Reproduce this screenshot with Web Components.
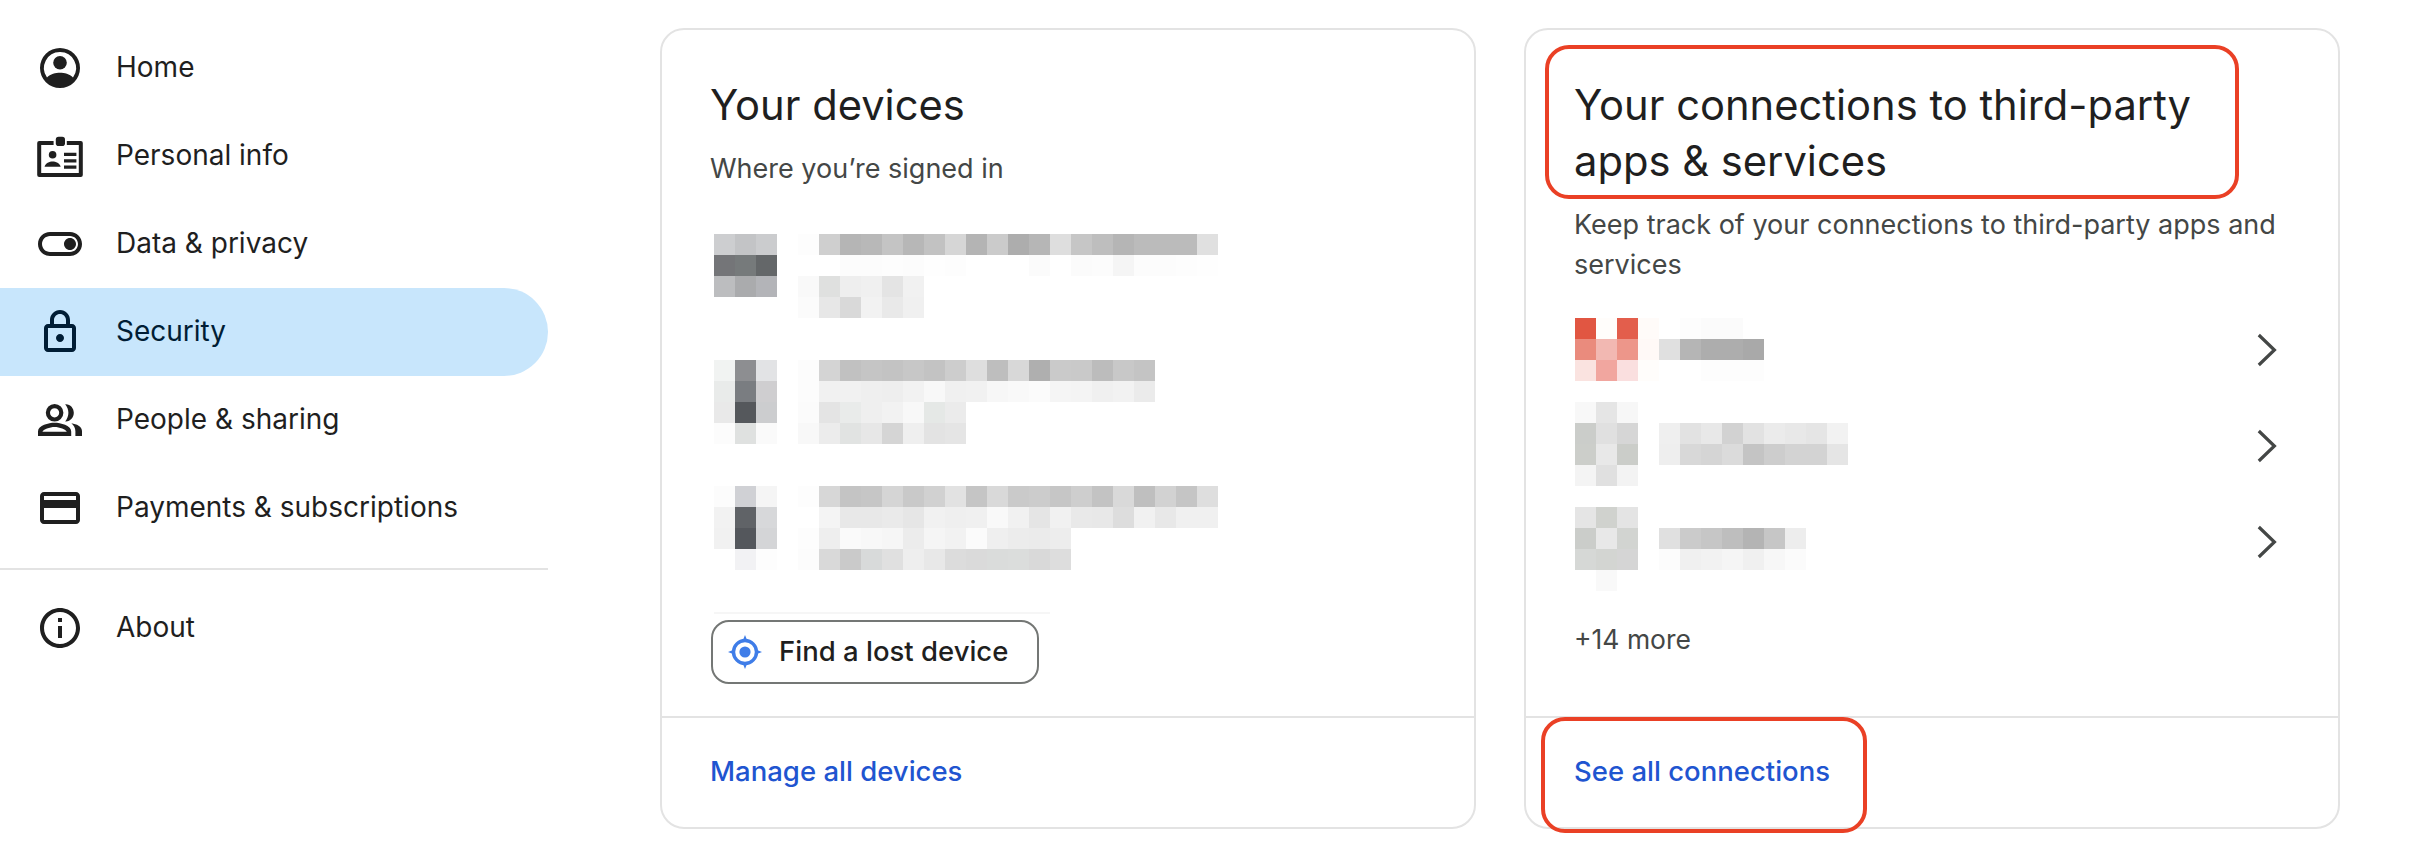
<!DOCTYPE html>
<html>
<head>
<meta charset="utf-8">
<title>Security</title>
<style>
html, body { margin: 0; padding: 0; background: #fff; }
body { font-family: Inter, Roboto, "Liberation Sans", sans-serif; color: #1f1f1f; }
</style>
</head>
<body>
<account-page>
  <side-nav slot="nav">
    <nav-item icon="home">Home</nav-item>
    <nav-item icon="badge">Personal info</nav-item>
    <nav-item icon="toggle">Data &amp; privacy</nav-item>
    <nav-item icon="lock" selected>Security</nav-item>
    <nav-item icon="people">People &amp; sharing</nav-item>
    <nav-item icon="card">Payments &amp; subscriptions</nav-item>
    <nav-item icon="info" slot="after">About</nav-item>
  </side-nav>

  <info-card slot="cards" subtitle="Where you’re signed in" link="Manage all devices">
    <span slot="title">Your devices</span>
    <device-row
      icon="cdced0 c3c4c6 cbccce|747578 767a7b 646769|bcbdbf aaabad b3b4b8"
      lines="fdfdfd cfcfcf b5b5b5 b8b8b8 c4c4c4 b7b7b7 c2c2c2 d6d6d6 b4b4b4 cbcbcb adadad b6b6b6 dedede c6c6c6 bebebe b5b5b5 bbbbbb bbbbbb bbbbbb e0e0e0|fff fff fcfcfc fcfcfc fdfdfd fcfcfc fefefe fdfdfd fff fff fff fbfbfb fff fbfbfb fcfcfc f5f5f5 fcfcfc fcfcfc fdfdfd fefefe|f9f9f9 dfe0df eeeeee f0f0f0 e4e4e4 f1f1f1|fbfbfb e7e7e7 d9d9d9 f2f2f2 e9e9e9 f0f0f0"></device-row>
    <device-row
      icon="f1f3f2 8d8e91 e2e3e5|e9ebea 7a7d81 cfced0|e9e9e9 55585c cccdcf|fcfcfc dfe1e0 fafafa"
      lines="fcfcfc d4d4d4 c1c1c1 c5c5c5 c3c3c3 c7c7c7 c3c3c3 cdcdcd dedede bebebe d8d8d8 afafaf cacaca c9c9c9 bcbcbc c8c8c8 c4c4c4|fcfcfc f1f1f1 f1f1f1 efefef eeeeee f2f2f2 f8f8f8 f0f0f0 f1f1f1 f7f7f7 f9f9f9 fbfbfb f5f5f5 f4f4f4 f0f0f0 f2f2f2 ebebeb|fbfbfb e4e4e4 e9ebea efefef f2f2f2 f8f8f8 e5e8e6 ebebeb|f8f8f8 ececec e1e3e2 e7e7e7 d5d5d5 efefef e3e3e3 e5e5e5"></device-row>
    <device-row
      icon="fcfcfc d0d1d5 f5f5f5|f2f2f2 606367 d7d8da|f1f1f1 54575c d4d5d7|fff f2f2f4 fdfdfd"
      lines="fdfdfd d7d7d7 c4c4c4 c6c6c6 d5d5d5 c9c9c9 d1d1d1 e2e2e2 c5c5c5 d9d9d9 cacaca cccccc c6c6c6 cecece c3c3c3 d9d9d9 bfbfbf d2d2d2 c5c5c5 dedede|fff f4f4f4 e8e8e8 e8e8e8 eaeaea e6e6e6 f1f1f1 efefef f0f0f0 f9f9f9 f1f1f1 e5e5e5 f1f1f1 e9e9e9 e8e8e8 dddddd f1f1f1 e8e8e8 f0f0f0 f0f0f0|fdfdfd eeeeee fafafa f8f8f8 f6f6f6 ececec f5f5f5 f2f2f2 fbfbfb efefef ececec ebebeb ededed|fcfcfc d9d9d9 cacaca d8dada e0e0e0 eeeeee e8e8e8 dcdcdc dadada dadcdb dbdddc d9d9d9 dddddd"></device-row>
    <find-button>Find a lost device</find-button>
  </info-card>

  <info-card slot="cards" subtitle="Keep track of your connections to third-party apps and services" link="See all connections" compact>
    <span slot="title">Your connections to third-party<br>apps &amp; services</span>
    <connection-row offset="16"
      cells="e15642 fffdfb e35e4c fffbf9 fff fdfdfd fbfbfb fbfbfb -|ea8b7d f2b8b2 ed968a fff9f7 e0e0e0 b5b5b5 adadad adadad a9a9a9|fae3e0 f1a69f fadfdf fffdfb fff fff fdfdfd fdfdfd fdfdfd"></connection-row>
    <connection-row offset="4"
      cells="f8f8f8 e5e5e5 f7f7f7|cbcdca e0e0e0 d6d6d6 - efefef e2e2e2 e8e8e8 d2d2d2 e2e2e2 ebebeb e8e8e8 e5e5e5 f2f2f2|ccceca e8e8e8 cbcdc9 - eeeeee d8d8d8 d5d5d5 dbdbdb c4c4c4 cdcdcd d3d3d3 d3d3d3 e5e5e5|f4f4f4 e0e0e0 f3f3f3"></connection-row>
    <connection-row offset="13"
      cells="e5e5e5 d0d2ce e4e4e4|cbcdca e8e8e8 d2d4d1 - e0e0e0 cbcbcb c6c6c6 bebebe b4b4b4 c6c6c6 ededed|d6d8d6 d3d5d2 d5d5d5 - fcfcfc f0f0f0 f2f2f2 f5f5f5 f0f0f0 f7f7f7 fbfbfb|- f9f9f9"></connection-row>
    <more-note>+14 more</more-note>
  </info-card>
</account-page>

<script>
const FONT = 'Inter, Roboto, "Liberation Sans", sans-serif';
// shared icon paths, all on a 24 unit box
const ICONS = {
  home: '<path fill-rule="evenodd" d="M12 2a10 10 0 1 0 0 20 10 10 0 0 0 0-20zm0 2a8 8 0 0 1 6.5 12.7C16.9 15.1 14.1 14.4 12 14.4s-4.9.7-6.5 2.3A8 8 0 0 1 12 4z"/><circle cx="12" cy="9.4" r="3.4"/>',
  badge: '<path fill-rule="evenodd" d="M1.6 4.5H8.8V6.5H2.6V20.5H21.4V6.5H15.4V4.5H22.4A1 1 0 0 1 23.4 5.5V21.5A1 1 0 0 1 22.4 22.5H1.6A1 1 0 0 1 .6 21.5V5.5A1 1 0 0 1 1.6 4.5z"/><rect x="9.9" y="2.4" width="4.6" height="4.6" rx="1.4"/><circle cx="8.3" cy="11.4" r="1.9"/><path d="M4.3 17.4c.3-1.9 2.5-2.7 4-2.7s3.7.8 4 2.7z"/><path d="M14 10.4h6.2v1.6H14zM14 13.6h6.2v1.6H14zM14 16.8h6.2v1.6H14z"/>',
  toggle: '<path d="M17 6H7c-3.31 0-6 2.69-6 6s2.69 6 6 6h10c3.31 0 6-2.69 6-6s-2.69-6-6-6zm0 10H7c-2.21 0-4-1.79-4-4s1.79-4 4-4h10c2.21 0 4 1.79 4 4s-1.79 4-4 4zm0-7c-1.66 0-3 1.34-3 3s1.34 3 3 3 3-1.34 3-3-1.34-3-3-3z"/>',
  lock: '<path d="M18 8h-1V6c0-2.76-2.24-5-5-5S7 3.24 7 6v2H6c-1.1 0-2 .9-2 2v10c0 1.1.9 2 2 2h12c1.1 0 2-.9 2-2V10c0-1.1-.9-2-2-2zM9 6c0-1.66 1.34-3 3-3s3 1.34 3 3v2H9V6zm9 14H6V10h12v10zm-6-3c1.1 0 2-.9 2-2s-.9-2-2-2-2 .9-2 2 .9 2 2 2z"/>',
  people: '<path fill-rule="evenodd" d="M9.3 4a4.4 4.4 0 1 0 0 8.8 4.4 4.4 0 0 0 0-8.8zm0 2.1a2.3 2.3 0 1 1 0 4.6 2.3 2.3 0 0 1 0-4.6z"/><path fill-rule="evenodd" d="M1 20v-2.3c0-3 5.4-4.3 8.3-4.3s8.3 1.3 8.3 4.3V20zm2.2-2.1h12.2c-.4-1.2-3.7-2.4-6.1-2.4s-5.7 1.2-6.1 2.4z"/><path d="M14.6 4.1c2.5-.2 4.3 1.9 4.3 4.3s-1.8 4.5-4.3 4.3c1-1.2 1.6-2.7 1.6-4.3s-.6-3.1-1.6-4.3zM17.7 13.6c2.6.4 5.3 1.6 5.3 3.9V20h-3.3v-2.4c0-1.6-.8-3-2-4z"/>',
  card: '<path d="M20 4H4c-1.11 0-1.99.89-1.99 2L2 18c0 1.11.89 2 2 2h16c1.11 0 2-.89 2-2V6c0-1.11-.89-2-2-2zm0 14H4v-6h16v6zm0-10H4V6h16v2z"/>',
  info: '<path d="M11 7h2v2h-2zm0 4h2v6h-2zm1-9C6.48 2 2 6.48 2 12s4.48 10 10 10 10-4.48 10-10S17.52 2 12 2zm0 18c-4.41 0-8-3.59-8-8s3.59-8 8-8 8 3.59 8 8-3.59 8-8 8z"/>'
};

const pageTemplate = document.createElement('template');
pageTemplate.innerHTML = `
<style>
:host { display: flex; width: 2418px; height: 864px; overflow: hidden; box-sizing: border-box; }
.nav { width: 548px; flex: none; padding-top: 24px; }
.cards { display: flex; gap: 48px; margin-left: 112px; padding-top: 28px; align-items: flex-start; }
</style>
<div class="nav"><slot name="nav"></slot></div>
<div class="cards"><slot name="cards"></slot></div>
`;
class AccountPage extends HTMLElement {
  constructor() {
    super();
    this.attachShadow({ mode: 'open' }).appendChild(pageTemplate.content.cloneNode(true));
  }
}

const navTemplate = document.createElement('template');
navTemplate.innerHTML = `
<style>
:host { display: block; }
hr { border: 0; height: 2px; background: #e3e3e3; margin: 16px 0 14px; }
</style>
<slot></slot>
<hr>
<slot name="after"></slot>
`;
class SideNav extends HTMLElement {
  constructor() {
    super();
    this.attachShadow({ mode: 'open' }).appendChild(navTemplate.content.cloneNode(true));
  }
}

class NavItem extends HTMLElement {
  constructor() {
    super();
    this.attachShadow({ mode: 'open' });
  }
  connectedCallback() {
    const icon = ICONS[this.getAttribute('icon')] || '';
    this.shadowRoot.innerHTML = `
<style>
:host { display: flex; align-items: center; height: 88px; font: 400 28px ${FONT}; color: #1f1f1f; border-radius: 0 44px 44px 0; }
:host([selected]) { background: #c8e6fc; color: #001d35; }
svg { width: 48px; height: 48px; margin: 0 32px 0 36px; flex: none; fill: currentColor; }
span { padding-bottom: 2px; }
</style>
<svg viewBox="0 0 24 24">${icon}</svg><span><slot></slot></span>`;
  }
}

class InfoCard extends HTMLElement {
  constructor() {
    super();
    this.attachShadow({ mode: 'open' });
  }
  connectedCallback() {
    const compact = this.hasAttribute('compact');
    this.shadowRoot.innerHTML = `
<style>
:host { display: flex; flex-direction: column; box-sizing: border-box; width: 816px; height: 801px; border: 2px solid #e3e3e3; border-radius: 24px; background: #fff; position: relative; flex: none; }
.main { flex: 1; padding: 47px 48px 0; min-height: 0; }
h2 { margin: 0; font: 400 41.7px/56px ${FONT}; color: #1f1f1f; }
p { margin: 16px 0 ${compact ? 17 : 45}px; font: 400 27px/40px ${FONT}; color: #444746; }
footer { border-top: 2px solid #e3e3e3; padding: 33px 48px 36px; font: 500 27.5px/40px ${FONT}; }
a { color: #1f55d0; text-decoration: none; }
/* red review marks drawn over the card */
.mark { position: absolute; box-sizing: border-box; border: 4px solid #ea4025; border-radius: 24px; pointer-events: none; }
.mark.head { left: 19px; top: 15px; width: 694px; height: 154px; }
.mark.foot { left: 15px; top: 687px; width: 326px; height: 116px; }
</style>
<div class="main">
  <h2><slot name="title"></slot></h2>
  <p>${this.getAttribute('subtitle')}</p>
  <slot></slot>
</div>
<footer><a href="#">${this.getAttribute('link')}</a></footer>
${compact ? '<div class="mark head"></div><div class="mark foot"></div>' : ''}`;
  }
}

// paints blurred-out content as a grid of 21px squares
class PixelBlock extends HTMLElement {
  constructor() {
    super();
    this.attachShadow({ mode: 'open' });
  }
  connectedCallback() {
    const rows = this.getAttribute('cells').split('|').map(r => r.trim().split(/\s+/));
    let html = '';
    rows.forEach(row => {
      html += '<div class="row">' + row.map(c => c === '-' ? '<i></i>' : `<i style="background:#${c}"></i>`).join('') + '</div>';
    });
    this.shadowRoot.innerHTML = `
<style>
:host { display: block; flex: none; }
.row { display: flex; height: 21px; }
i { display: block; width: 21px; height: 21px; flex: none; }
</style>${html}`;
  }
}

class DeviceRow extends HTMLElement {
  constructor() {
    super();
    this.attachShadow({ mode: 'open' });
  }
  connectedCallback() {
    this.shadowRoot.innerHTML = `
<style>
:host { display: flex; gap: 21px; height: 84px; margin: 0 0 42px 4px; }
</style>
<pixel-block cells="${this.getAttribute('icon')}"></pixel-block>
<pixel-block cells="${this.getAttribute('lines')}"></pixel-block>`;
  }
}

class ConnectionRow extends HTMLElement {
  constructor() {
    super();
    this.attachShadow({ mode: 'open' });
  }
  connectedCallback() {
    this.shadowRoot.innerHTML = `
<style>
:host { display: flex; height: 96px; align-items: flex-start; justify-content: space-between; margin-left: 1px; }
pixel-block { margin-top: ${this.getAttribute('offset')}px; }
svg { width: 48px; height: 48px; align-self: center; margin-right: -6px; fill: none; stroke: #444746; stroke-width: 1.6; }
</style>
<pixel-block cells="${this.getAttribute('cells')}"></pixel-block>
<svg viewBox="0 0 24 24"><path d="M5.4 4.5 13.2 12 5.4 19.5"/></svg>`;
  }
}

const findTemplate = document.createElement('template');
findTemplate.innerHTML = `
<style>
:host { display: block; margin-top: 0; }
.rule { height: 2px; width: 336px; margin: 0 0 6px 4px; background: #f6f6f6; }
button { display: flex; align-items: center; box-sizing: border-box; width: 328px; height: 64px; margin-left: 1px; padding: 0 0 0 14px; border: 2px solid #747775; border-radius: 18px; background: #fff; color: #1f1f1f; font: 500 27.5px ${FONT}; }
svg { width: 36px; height: 36px; margin-right: 16px; flex: none; }
span { padding-bottom: 3px; }
</style>
<div class="rule"></div>
<button>
  <svg viewBox="0 0 36 36">
    <circle cx="18" cy="18" r="11.5" fill="none" stroke="#3f7de8" stroke-width="3.4"/>
    <circle cx="18" cy="18" r="5.6" fill="#3f7de8"/>
    <path d="M18 1l2 5h-4zM18 35l2-5h-4zM1 18l5-2v4zM35 18l-5-2v4z" fill="#3f7de8"/>
  </svg>
  <span><slot></slot></span>
</button>
`;
class FindButton extends HTMLElement {
  constructor() {
    super();
    this.attachShadow({ mode: 'open' }).appendChild(findTemplate.content.cloneNode(true));
  }
}

const moreTemplate = document.createElement('template');
moreTemplate.innerHTML = `
<style>
:host { display: block; margin-top: 29px; font: 400 26.5px/40px ${FONT}; color: #444746; }
</style>
<slot></slot>
`;
class MoreNote extends HTMLElement {
  constructor() {
    super();
    this.attachShadow({ mode: 'open' }).appendChild(moreTemplate.content.cloneNode(true));
  }
}

customElements.define('pixel-block', PixelBlock);
customElements.define('nav-item', NavItem);
customElements.define('side-nav', SideNav);
customElements.define('device-row', DeviceRow);
customElements.define('connection-row', ConnectionRow);
customElements.define('find-button', FindButton);
customElements.define('more-note', MoreNote);
customElements.define('info-card', InfoCard);
customElements.define('account-page', AccountPage);
</script>
</body>
</html>
